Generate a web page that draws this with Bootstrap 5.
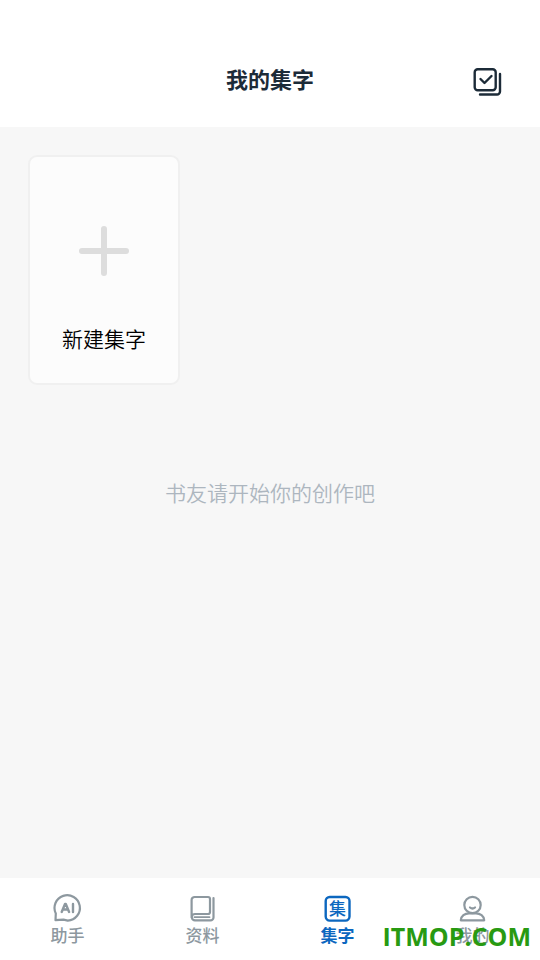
<!DOCTYPE html>
<html lang="zh-CN">
<head>
<meta charset="utf-8">
<meta name="viewport" content="width=device-width, initial-scale=1">
<title>我的集字</title>
<link href="https://cdn.jsdelivr.net/npm/bootstrap@5.3.0/dist/css/bootstrap.min.css" rel="stylesheet">
<style>
body { font-family: "Noto Sans CJK SC", sans-serif; background: #f7f7f7; color: #1c2b38; }
.top-bar { padding: 57px 36px 28px; background: #fff; }
.top-bar h1 { font-size: 22px; line-height: 42px; font-weight: 700; }
.side { width: 32px; }
.icon-btn { line-height: 0; padding: 8px 0 0; }
.content-area { padding: 28px; }
.new-tile { width: 152px; height: 230px; padding: 68px 0 0; background: #fcfcfc; border: 2px solid #f0f0f0; border-radius: 9px; color: #000; font-size: 21px; line-height: 30px; font-weight: 350; }
.new-tile svg { margin-bottom: 46px; }
.new-tile:hover { background: #fcfcfc; border-color: #f0f0f0; color: #000; }
.empty-note { margin-top: 91px; font-size: 21px; line-height: 32px; font-weight: 350; color: #adb6bf; }
.tab-bar { height: 82px; padding-top: 14px; background: #fff; }
.tab-bar a { color: #8d989f; font-size: 17px; line-height: 22px; font-weight: 500; }
.tab-bar a.active { color: #0c67bf; font-weight: 700; }
.stamp { right: 9px; bottom: 6px; font: 700 25px/36px "Open Sans", sans-serif; color: #289a12; }
svg text { stroke: none; fill: currentColor; }
</style>
</head>
<body class="d-flex flex-column min-vh-100">
<header class="top-bar d-flex align-items-start justify-content-between">
  <span class="side"></span>
  <h1 class="m-0">我的集字</h1>
  <button type="button" class="btn icon-btn side px-0 border-0" aria-label="批量选择">
    <svg width="32" height="32" viewBox="0 0 32 32" fill="none" stroke="#1c2b38" stroke-width="2.4" stroke-linecap="round" stroke-linejoin="round"><rect x="2.700" y="4.200" width="21" height="21" rx="3"/><path d="M8.500 14l4 4 7-7"/><path d="M28 9V26.500a3 3 0 0 1-3 3H8"/></svg>
  </button>
</header>
<main class="content-area flex-grow-1">
  <button type="button" class="btn new-tile d-flex flex-column align-items-center">
    <svg width="52" height="52" viewBox="0 0 52 52" stroke="#ddd" stroke-width="6" stroke-linecap="round"><path d="M26 4v44M4 26h44"/></svg>
    <span>新建集字</span>
  </button>
  <p class="empty-note text-center mb-0">书友请开始你的创作吧</p>
</main>
<nav class="tab-bar position-relative d-flex" aria-label="主导航">
  <a href="#" class="col d-flex flex-column align-items-center text-decoration-none">
    <svg width="32" height="32" viewBox="0 0 32 32" fill="none" stroke="currentColor" stroke-width="2.200" stroke-linecap="round" stroke-linejoin="round"><path d="M3.500 28.200L3.800 21.500A12.700 12.700 0 1 1 15.800 28.600L11.500 27.700Z"/><path d="M9.700 20l3.300-8h.8l3.300 8M11 17.500h5M21 12v8" stroke-width="2.400"/></svg>
    <span>助手</span>
  </a>
  <a href="#" class="col d-flex flex-column align-items-center text-decoration-none">
    <svg width="32" height="32" viewBox="0 0 32 32" fill="none" stroke="currentColor" stroke-width="2.200" stroke-linecap="round" stroke-linejoin="round"><path d="M4.600 25.500V8a3 3 0 0 1 3-3h13.400a2 2 0 0 1 2 2v13a2 2 0 0 1-2 2H8a3.200 3.200 0 0 0 0 6.400h15.500a3 3 0 0 0 3-3V6"/><path d="M7.500 25.200h15" stroke-width="1.800"/></svg>
    <span>资料</span>
  </a>
  <a href="#" class="active col d-flex flex-column align-items-center text-decoration-none" aria-current="page">
    <svg width="32" height="32" viewBox="0 0 32 32" fill="none" stroke="currentColor" stroke-width="2.400"><rect x="3.700" y="5" width="23.800" height="23.600" rx="4"/><text x="15.600" y="22.500" font-size="17" font-weight="500" text-anchor="middle">集</text></svg>
    <span>集字</span>
  </a>
  <a href="#" class="col d-flex flex-column align-items-center text-decoration-none">
    <svg width="32" height="32" viewBox="0 0 32 32" fill="none" stroke="currentColor" stroke-width="2.200" stroke-linecap="round" stroke-linejoin="round"><circle cx="15.500" cy="13" r="8.200"/><path d="M13 15.500q2.500 2 5 0"/><path d="M3.800 28.300C3.800 24 8 21.300 12 21.300h7c4 0 8.200 2.700 8.200 7Z"/></svg>
    <span>我的</span>
  </a>
  <span class="stamp position-absolute">ITMOP.COM</span>
</nav>
<script src="https://cdn.jsdelivr.net/npm/bootstrap@5.3.0/dist/js/bootstrap.bundle.min.js"></script>
</body>
</html>
